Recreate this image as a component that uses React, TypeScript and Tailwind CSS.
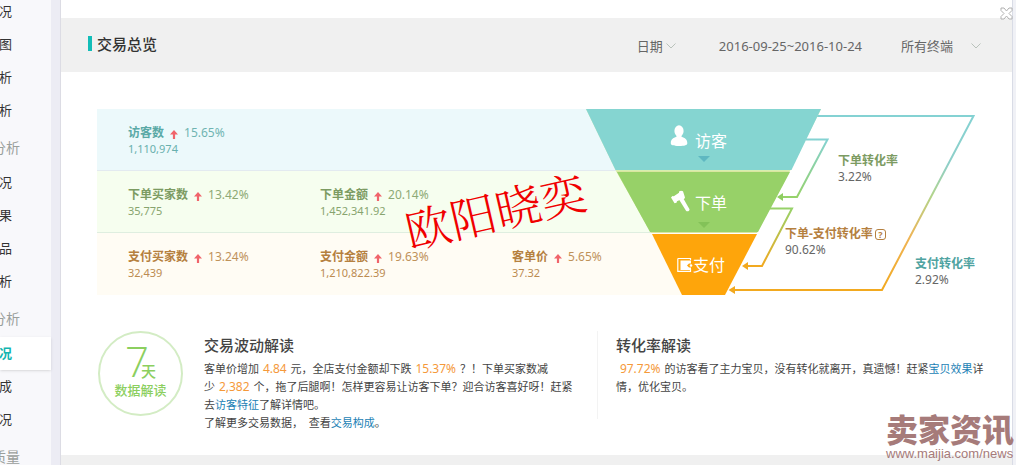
import React from "react";
import clsx from "clsx";

type Stat = { label: string; change: string; value: string };

const navItems = [
  { text: "况" },
  { text: "图" },
  { text: "析" },
  { text: "析" },
  { text: "分析", group: true },
  { text: "况" },
  { text: "果" },
  { text: "品" },
  { text: "析" },
  { text: "分析", group: true },
  { text: "况", active: true },
  { text: "成" },
  { text: "况" },
  { text: "质量", group: true },
];

const rows: { style: string; stats: Stat[] }[] = [
  {
    style: "border-b border-[#e3eaf0] bg-[#ecf9fb] text-[#5aa9a6]",
    stats: [{ label: "访客数", change: "15.65%", value: "1,110,974" }],
  },
  {
    style: "border-b border-[#dfeee0] bg-[#f6feef] text-[#7c9b62]",
    stats: [
      { label: "下单买家数", change: "13.42%", value: "35,775" },
      { label: "下单金额", change: "20.14%", value: "1,452,341.92" },
    ],
  },
  {
    style: "bg-[#fffcf4] text-[#b5803f]",
    stats: [
      { label: "支付买家数", change: "13.24%", value: "32,439" },
      { label: "支付金额", change: "19.63%", value: "1,210,822.39" },
      { label: "客单价", change: "5.65%", value: "37.32" },
    ],
  },
];

const Sidebar = () => (
  <nav className="sticky top-0 h-screen w-[61px] shrink-0 overflow-hidden border-r border-[#dcdce4] bg-[#ececf4]">
    <div className="flow-root h-full w-[51px] bg-[#f8f8fb]">
      <ul className="-mt-[5px]">
        {navItems.map((item, i) => (
          <li
            key={i}
            className={clsx(
              "flex",
              item.group
                ? "h-[39px] pt-[3px] text-sm text-[#9a9f9c]"
                : "h-[33px] text-[13px] text-[#333]",
              item.active && "bg-white font-bold shadow-sm"
            )}
          >
            <a
              href="#"
              className={clsx(
                "flex items-center justify-end whitespace-nowrap",
                item.group ? "w-5" : "w-3",
                item.active && "text-[#12b5b0]"
              )}
            >
              {item.text}
            </a>
          </li>
        ))}
      </ul>
    </div>
  </nav>
);

const Chevron = () => (
  <svg
    viewBox="0 0 10 6"
    className="pointer-events-none absolute top-[7px] right-0 h-[6px] w-[10px]"
  >
    <path d="M.5.5 5 5 9.5.5" fill="none" stroke="#b9c2bb" />
  </svg>
);

const Header = () => (
  <header className="flex h-[54px] items-center justify-between bg-[#f0f0f0] pr-[31px] pl-[27px]">
    <h1 className="flex items-center gap-[5px] pb-[3px] text-[15px] leading-5 font-medium text-[#333]">
      <span className="h-[15px] w-1 bg-[#12bdb8]" />
      交易总览
    </h1>
    <div className="flex items-center pt-0.5 text-[13px] leading-5 text-[#666]">
      <label className="relative mr-[43px]">
        <select
          aria-label="日期"
          className="block w-[39px] appearance-none bg-transparent text-[13px]"
        >
          <option>日期</option>
        </select>
        <Chevron />
      </label>
      <span className="mr-[39px]">2016-09-25~2016-10-24</span>
      <label className="relative">
        <select
          aria-label="终端"
          className="block w-[80px] appearance-none bg-transparent text-[13px]"
        >
          <option>所有终端</option>
        </select>
        <Chevron />
      </label>
    </div>
  </header>
);

const StatCell = ({ label, change, value }: Stat) => (
  <div className="w-48 shrink-0 leading-4">
    <div className="flex items-center gap-1.5 text-xs leading-4">
      <b>{label}</b>
      <svg viewBox="0 0 8 9" className="mt-[3px] h-[9px] w-2">
        <path d="M4 0 8 4.6H5.1V9H2.9V4.6H0Z" fill="#f0646b" />
      </svg>
      <span className="opacity-85">{change}</span>
    </div>
    <div className="text-[11px] leading-4 opacity-90">{value}</div>
  </div>
);

const FunnelShape = () => (
  <svg viewBox="0 0 390 186" className="h-[186px] w-[390px]">
    <defs>
      <linearGradient id="outer" gradientUnits="userSpaceOnUse" x1="0" y1="7" x2="0" y2="181">
        <stop offset="0" stopColor="#84d2d3" />
        <stop offset=".28" stopColor="#8fcfc8" />
        <stop offset=".46" stopColor="#b3d48b" />
        <stop offset=".7" stopColor="#efb455" />
        <stop offset="1" stopColor="#f2a91f" />
      </linearGradient>
      <linearGradient id="order" gradientUnits="userSpaceOnUse" x1="0" y1="30" x2="0" y2="88">
        <stop offset="0" stopColor="#84d2d3" />
        <stop offset="1" stopColor="#96d26a" />
      </linearGradient>
      <linearGradient id="pay" gradientUnits="userSpaceOnUse" x1="0" y1="99" x2="0" y2="157">
        <stop offset="0" stopColor="#96d26a" />
        <stop offset="1" stopColor="#f2a91f" />
      </linearGradient>
    </defs>

    {/* Conversion paths */}
    <g fill="none" strokeWidth="2">
      <path d="M231 7H387.500L296 181H147" stroke="url(#outer)" />
      <path d="M220 30.500H241.500L211 88H196" stroke="url(#order)" />
      <path d="M184 99.500H206L176 157H161" stroke="url(#pay)" />
    </g>
    <path d="M191 88 197 84V92Z" fill="#8fce61" />
    <path d="M156 157 162 153V161Z" fill="#f2a91f" />
    <path d="M142.500 181 149 177V185Z" fill="#f2a91f" />

    {/* Levels */}
    <path d="M0 0H235L204 62H30Z" fill="#d6efb0" />
    <path d="M30 62H204L171 124H65Z" fill="#d9e6a0" />
    <path d="M0 0H235L205.500 61H29.500Z" fill="#85d5d1" />
    <path d="M31 63H204L172 123H64Z" fill="#97d168" />
    <path d="M66 125H171L139 186H96Z" fill="#fea50b" />
    <path d="M112 47H124L118 53Z" fill="#5fb8c1" />
    <path d="M112 113H124L118 119Z" fill="#83c258" />

    {/* Visitor */}
    <g fill="#fff">
      <ellipse cx="93" cy="22" rx="4.600" ry="5.800" />
      <path d="M84.800 34.300c0-4 2.200-5.500 5.700-6.500v-2h5v2c3.500 1 5.800 2.500 5.800 6.500 0 2-2.500 2.700-8.300 2.700s-8.200-.7-8.200-2.700Z" />
    </g>
    {/* Gavel */}
    <g fill="#fff">
      <path d="M85 88.500 86.500 87 87.800 87.300 93 83.700 93 82.500 95 81.800 97 82.200 99 88.500 98 90.300 96.500 89.800 91 92.300 90.500 93.700 88.500 94.200Z" />
      <path d="M93 90.500 96.800 88.500 103.500 100.200C103.800 102 101.200 103 100 101.700Z" />
    </g>
    {/* Wallet */}
    <path d="M91.800 149.500H104.500V151M91.800 149.500V162.300H104.500V160" fill="none" stroke="#fff" strokeWidth="1.200" />
    <path d="M94.500 151.500H105V154.500H103L101 156.500 103 158.500H105V161H94.500Z" fill="#fff" />
    <circle cx="105" cy="156.500" r="1.300" fill="#fff" />
  </svg>
);

const Funnel = () => (
  <div className="relative -ml-[104px] w-[390px] shrink-0">
    <FunnelShape />
    <span className="absolute top-5 left-[109px] text-base text-white">访客</span>
    <span className="absolute top-[82px] left-[109px] text-base text-white">下单</span>
    <span className="absolute top-36 left-[107px] text-base text-white">支付</span>

    <div className="absolute top-11 left-[252px] text-xs leading-4 text-[#666]">
      <b className="block text-[#7c9b62]">下单转化率</b>
      3.22%
    </div>
    <div className="absolute top-[117px] left-[199px] text-xs leading-4 text-[#666]">
      <b className="flex items-center gap-0.5 text-[#b5803f]">
        下单-支付转化率
        <button
          type="button"
          className="h-[11px] w-[11px] rounded-[3px] border border-current text-center text-[9px] leading-[9px]"
        >
          ?
        </button>
      </b>
      90.62%
    </div>
    <div className="absolute top-[147px] left-[329px] text-xs leading-4 text-[#666]">
      <b className="block text-[#4fa3a1]">支付转化率</b>
      2.92%
    </div>
  </div>
);

const Num = ({ children }: { children: React.ReactNode }) => (
  <span className="mx-px text-xs leading-none text-[#f5993a]">{children}</span>
);

const TextLink = ({ children }: { children: React.ReactNode }) => (
  <a href="#" className="text-[#1b7fb5]">
    {children}
  </a>
);

const Insights = () => (
  <section className="mt-9 flex pr-[22px] pl-[37px] text-[11px] leading-[18px] text-[#444]">
    <div className="flex h-[85px] w-[85px] shrink-0 flex-col items-center rounded-full border-2 border-[#d3ecc4] pt-[7px] text-[#8ccf5f]">
      <div className="flex items-baseline">
        <span className="font-['Open_Sans'] text-[42px] leading-[42px] font-light">7</span>
        <span className="-ml-2 text-[15px] leading-5 font-medium">天</span>
      </div>
      <span className="text-[13px] leading-4 font-medium">数据解读</span>
    </div>

    <div className="ml-[21px] min-w-0 flex-1 pt-[3px] whitespace-nowrap">
      <h2 className="mb-1 text-[15px] leading-[22px] font-medium">交易波动解读</h2>
      <p>
        客单价增加 <Num>4.84</Num> 元，全店支付金额却下跌 <Num>15.37%</Num> ？！下单买家数减
        <br />
        少 <Num>2,382</Num> 个，拖了后腿啊！怎样更容易让访客下单？迎合访客喜好呀！赶紧
        <br />
        去<TextLink>访客特征</TextLink>了解详情吧。
      </p>
      <p>
        了解更多交易数据，&nbsp; 查看<TextLink>交易构成</TextLink>。
      </p>
    </div>

    <div className="h-[88px] w-px bg-[#f3f3f3]" />

    <div className="ml-[18px] w-[374px] shrink-0 pt-[3px] whitespace-nowrap">
      <h2 className="mb-1 text-[15px] leading-[22px] font-medium">转化率解读</h2>
      <p>
        &nbsp;<Num>97.72%</Num> 的访客看了主力宝贝，没有转化就离开，真遗憾！赶紧
        <TextLink>宝贝效果</TextLink>详
        <br />
        情，优化宝贝。
      </p>
    </div>
  </section>
);

const App = () => (
  <div className="relative flex min-h-screen bg-[#f0f0f0] font-['Noto_Sans','Noto_Sans_CJK_SC',sans-serif]">
    <Sidebar />
    <div className="min-w-0 flex-1">
      <main className="bg-white pt-[18px] pb-[23px]">
        <Header />
        <section className="relative mt-[37px] flex px-9">
          <div className="min-w-0 flex-1">
            {rows.map((row, i) => (
              <div key={i} className={clsx("flex h-[62px] pt-4 pl-[31px]", row.style)}>
                {row.stats.map((stat) => (
                  <StatCell key={stat.label} {...stat} />
                ))}
              </div>
            ))}
          </div>
          <Funnel />
          <div className="absolute top-[72px] left-[342px] -rotate-13 font-['Noto_Serif_CJK_SC','Noto_Sans_CJK_SC',serif] text-[46px] leading-[56px] font-light whitespace-nowrap text-[#f00000]">
            欧阳晓奕
          </div>
        </section>
        <Insights />
      </main>
    </div>
    <div className="w-1 border-l border-[#d9dce6] bg-[#f0f1f6]" />

    <button type="button" aria-label="关闭" className="absolute top-[7px] right-[3px] h-[13px] w-[13px]">
      <svg viewBox="0 0 13 13" className="h-full w-full">
        <path
          d="M1 1H4L6.500 4 9 1H12V3.500L9 6.500 12 9.500V12H9L6.500 9 4 12H1V9.500L4 6.500 1 3.500Z"
          fill="#fff"
          stroke="#b0b0b0"
        />
      </svg>
    </button>

    {/* Site mark */}
    <div className="absolute right-0 bottom-0.5 w-[130px] text-[#a67b7a]">
      <div className="text-[32px] leading-[30px] font-black whitespace-nowrap">卖家资讯</div>
      <div className="font-['Liberation_Sans',sans-serif] text-[13px] leading-[18px] whitespace-nowrap">
        www.maijia.com/news
      </div>
    </div>
  </div>
);

export default App;
